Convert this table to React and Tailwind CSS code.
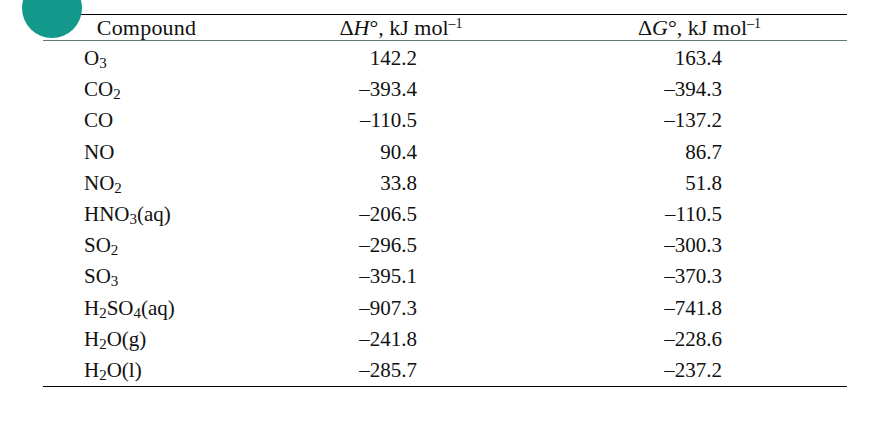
const rows = [
  [["O", "3"], "142.2", "163.4"],
  [["CO", "2"], "–393.4", "–394.3"],
  [["CO"], "–110.5", "–137.2"],
  [["NO"], "90.4", "86.7"],
  [["NO", "2"], "33.8", "51.8"],
  [["HNO", "3", "(aq)"], "–206.5", "–110.5"],
  [["SO", "2"], "–296.5", "–300.3"],
  [["SO", "3"], "–395.1", "–370.3"],
  [["H", "2", "SO", "4", "(aq)"], "–907.3", "–741.8"],
  [["H", "2", "O(g)"], "–241.8", "–228.6"],
  [["H", "2", "O(l)"], "–285.7", "–237.2"],
];

// odd-index parts are subscripts
const Formula = ({ parts }) => (
  <span>
    {parts.map((p, i) =>
      i % 2 === 1 ? (
        <sub key={i} className="text-[15px] align-baseline relative top-[3px]">
          {p}
        </sub>
      ) : (
        <span key={i}>{p}</span>
      )
    )}
  </span>
);

const App = () => {
  return (
    <div
      className="relative w-[869px] h-[438px] bg-white overflow-hidden text-[#111] text-[21px]"
      style={{ fontFamily: '"Liberation Serif", "Times New Roman", serif' }}
    >
      {/* CIRCLE */}
      <div className="absolute left-[22px] top-[-22px] w-[60px] h-[60px] rounded-full bg-[#12998b] z-10" />

      <div className="ml-[43px] mt-[14px] w-[804px]">
        {/* HEADER */}
        <div className="flex h-[27px] items-center border-t-[1.5px] border-black border-b-[1.5px] border-b-[#66777a] leading-none text-[22px]">
          <div className="w-[207px] text-center pt-[1px] tracking-[0.2px]">Compound</div>
          <div className="w-[302px] text-center pt-[1px]">
            Δ<i>H</i>°, kJ mol
            <sup className="text-[14px] relative top-[-7px] align-baseline">–1</sup>
          </div>
          <div className="w-[295px] text-center pt-[1px]">
            Δ<i>G</i>°, kJ mol
            <sup className="text-[14px] relative top-[-7px] align-baseline">–1</sup>
          </div>
        </div>

        {/* BODY */}
        <div className="border-b-[1.5px] border-black pt-[2px]">
          {rows.map(([f, h, g], i) => (
            <div key={i} className="flex h-[31.2px] items-center leading-none">
              <div className="w-[207px] pl-[41px]">
                <Formula parts={f} />
              </div>
              <div className="w-[302px] text-right pr-[135px]">{h}</div>
              <div className="w-[295px] text-right pr-[125px]">{g}</div>
            </div>
          ))}
        </div>
      </div>
    </div>
  );
};

export default App;
